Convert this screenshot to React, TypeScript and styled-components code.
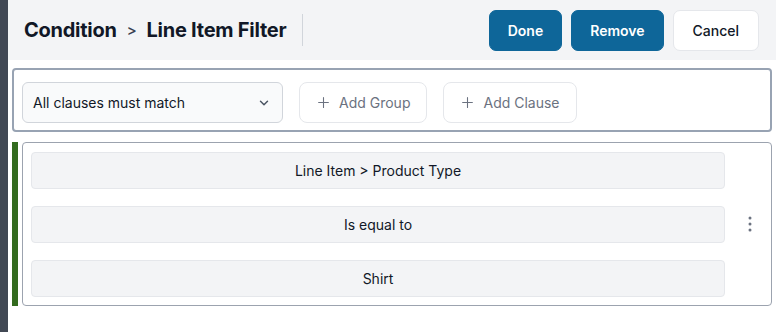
import styled, { createGlobalStyle } from "styled-components";

const GlobalStyle = createGlobalStyle`
  html, body {
    margin: 0;
    padding: 0;
    background: #ffffff;
  }
  body {
    font-family: Inter, "Noto Sans", sans-serif;
    color: #111827;
  }
`;

const Page = styled.div`
  display: flex;
  width: 776px;
  height: 332px;
  overflow: hidden;
`;

const SideStrip = styled.div`
  width: 8px;
  flex-shrink: 0;
  background: #414854;
`;

const Content = styled.div`
  flex: 1;
  display: flex;
  flex-direction: column;
  min-width: 0;
`;

const Header = styled.header`
  height: 60px;
  background: #f3f4f6;
  display: flex;
  align-items: center;
  padding: 0 17px 0 16px;
`;

const Title = styled.h1`
  margin: 0;
  font-size: 20px;
  font-weight: 700;
  letter-spacing: -0.25px;
  display: flex;
  align-items: center;
  gap: 10px;
  padding-right: 16px;
  border-right: 1px solid #d1d5db;
  height: 32px;
`;

const Crumb = styled.span`
  font-size: 15px;
  font-weight: 500;
  color: #374151;
`;

const Actions = styled.div`
  margin-left: auto;
  display: flex;
  gap: 9px;
`;

const Button = styled.button<{ $primary?: boolean }>`
  height: 41px;
  padding: 0 ${(p) => (p.$primary ? 18 : 19)}px;
  border-radius: 7px;
  font-family: inherit;
  font-size: 14px;
  font-weight: ${(p) => (p.$primary ? 600 : 500)};
  border: 1px solid ${(p) => (p.$primary ? "#0e6699" : "#e5e7eb")};
  background: ${(p) => (p.$primary ? "#0e6699" : "#ffffff")};
  color: ${(p) => (p.$primary ? "#ffffff" : "#111827")};
`;

const Body = styled.div`
  padding: 8px 4px 0 4px;
  display: flex;
  flex-direction: column;
  gap: 10px;
`;

const FilterBar = styled.div`
  border: 2px solid #98a3b3;
  border-radius: 4px;
  display: flex;
  align-items: center;
  padding: 12px 8px 7px;
  gap: 16px;
`;

const Select = styled.div`
  width: 261px;
  height: 41px;
  box-sizing: border-box;
  border: 1px solid #d1d5db;
  border-radius: 6px;
  background: #f9fafb;
  display: flex;
  align-items: center;
  justify-content: space-between;
  padding: 0 11px 0 10px;
  font-size: 14px;
  color: #111827;
`;

const GhostButton = styled.button`
  height: 41px;
  box-sizing: border-box;
  border: 1px solid #e5e7eb;
  border-radius: 8px;
  background: #ffffff;
  display: flex;
  align-items: center;
  gap: 9px;
  padding: 0 16px 0 17px;
  font-family: inherit;
  font-size: 14px;
  color: #6b7280;
`;

const GroupRow = styled.div`
  display: flex;
  gap: 4px;
`;

const GroupMarker = styled.div`
  width: 6px;
  background: #336b1f;
`;

const ClauseCard = styled.div`
  flex: 1;
  height: 164px;
  box-sizing: border-box;
  border: 1px solid #9ca3af;
  border-radius: 4px;
  display: flex;
  align-items: center;
  padding: 0 0 0 8px;
`;

const Fields = styled.div`
  flex: 1;
  display: flex;
  flex-direction: column;
  gap: 17px;
`;

const Field = styled.div`
  height: 37px;
  box-sizing: border-box;
  background: #f3f4f6;
  border: 1px solid #e5e7eb;
  border-radius: 4px;
  display: flex;
  align-items: center;
  justify-content: center;
  font-size: 14px;
  color: #111827;
`;

const MenuButton = styled.div`
  width: 46px;
  box-sizing: border-box;
  padding-left: 4px;
  display: flex;
  justify-content: center;
  color: #6b7280;
`;

const Chevron = () => (
  <svg width="14" height="14" viewBox="0 0 24 24" fill="none" stroke="#4b5563" strokeWidth="2.5" strokeLinecap="round" strokeLinejoin="round">
    <path d="m6 9 6 6 6-6" />
  </svg>
);

const Plus = () => (
  <svg width="13" height="13" viewBox="0 0 24 24" fill="none" stroke="currentColor" strokeWidth="2" strokeLinecap="round">
    <path d="M12 3v18M3 12h18" />
  </svg>
);

const Kebab = () => (
  <svg width="4" height="16" viewBox="0 0 4 16" fill="currentColor">
    <circle cx="2" cy="2" r="1.5" />
    <circle cx="2" cy="8" r="1.5" />
    <circle cx="2" cy="14" r="1.5" />
  </svg>
);

const fields = ["Line Item > Product Type", "Is equal to", "Shirt"];

export default function App() {
  return (
    <>
      <GlobalStyle />
      <Page>
        <SideStrip />
        <Content>
          <Header>
            <Title>
              Condition <Crumb>&gt;</Crumb> Line Item Filter
            </Title>
            <Actions>
              <Button $primary>Done</Button>
              <Button $primary>Remove</Button>
              <Button>Cancel</Button>
            </Actions>
          </Header>
          <Body>
            <FilterBar>
              <Select>
                All clauses must match
                <Chevron />
              </Select>
              <GhostButton>
                <Plus />
                Add Group
              </GhostButton>
              <GhostButton>
                <Plus />
                Add Clause
              </GhostButton>
            </FilterBar>
            <GroupRow>
              <GroupMarker />
              <ClauseCard>
                <Fields>
                  {fields.map((f) => (
                    <Field key={f}>{f}</Field>
                  ))}
                </Fields>
                <MenuButton>
                  <Kebab />
                </MenuButton>
              </ClauseCard>
            </GroupRow>
          </Body>
        </Content>
      </Page>
    </>
  );
}
